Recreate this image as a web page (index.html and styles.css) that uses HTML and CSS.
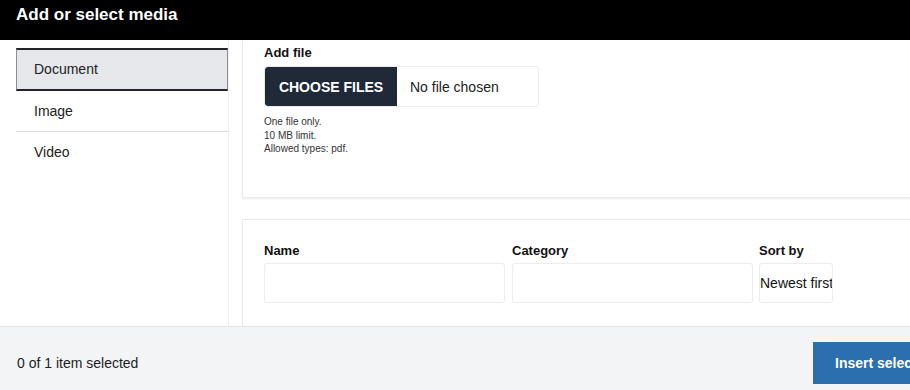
FILE: index.html
```html
<!DOCTYPE html>
<html>
<head>
<meta charset="utf-8">
<link rel="stylesheet" href="styles.css">
</head>
<body>
<div class="dialog">
  <header class="titlebar"><h1 class="title">Add or select media</h1></header>
  <div class="body">
    <nav class="sidebar">
      <div class="tab tab-active">Document</div>
      <div class="tab">Image</div>
      <div class="tab tab-last">Video</div>
    </nav>
    <main class="main">
      <section class="card card-upload">
        <div class="label">Add file</div>
        <div class="file-input">
          <span class="file-btn">CHOOSE FILES</span>
          <span class="file-name">No file chosen</span>
        </div>
        <div class="help">
          <div>One file only.</div>
          <div>10 MB limit.</div>
          <div>Allowed types: pdf.</div>
        </div>
      </section>
      <section class="card card-filters">
        <div class="filters">
          <div class="field field-name">
            <div class="label">Name</div>
            <div class="input"></div>
          </div>
          <div class="field field-cat">
            <div class="label">Category</div>
            <div class="input"></div>
          </div>
          <div class="field field-sort">
            <div class="label">Sort by</div>
            <div class="input select">Newest first</div>
          </div>
        </div>
      </section>
    </main>
  </div>
  <footer class="footer">
    <span class="count">0 of 1 item selected</span>
    <span class="insert">Insert selected</span>
  </footer>
</div>
</body>
</html>
```

FILE: styles.css
```css
html, body {
  margin: 0;
  padding: 0;
  background: #fff;
  font-family: "Liberation Sans", Arial, sans-serif;
  color: #222;
}
.dialog {
  width: 910px;
  height: 390px;
  overflow: hidden;
  display: flex;
  flex-direction: column;
}
.titlebar {
  height: 40px;
  flex: none;
  background: #000;
  padding: 0 16px;
  box-sizing: border-box;
}
.title {
  margin: 0;
  color: #fff;
  font-size: 17px;
  font-weight: bold;
  line-height: 29px;
}
.body {
  height: 286px;
  flex: none;
  display: flex;
  overflow: hidden;
}
.sidebar {
  width: 229px;
  flex: none;
  box-sizing: border-box;
  padding: 8px 0 0 16px;
  border-right: 1px solid #efefef;
}
.tab {
  width: 212px;
  box-sizing: border-box;
  height: 41px;
  line-height: 41px;
  padding-left: 18px;
  font-size: 14px;
  color: #222;
  border-bottom: 1px solid #dcdcdc;
}
.tab-last {
  border-bottom: none;
}
.tab-active {
  height: 43px;
  line-height: 39px;
  background: #e6e7eb;
  border-top: 2px solid #23252b;
  border-bottom: 2px solid #23252b;
  border-left: 1px solid #8d8d92;
  border-right: 1px solid #8d8d92;
  padding-left: 17px;
}
.main {
  flex: none;
  width: 720px;
  padding-left: 13px;
  box-sizing: border-box;
}
.card {
  background: #fff;
  border: 1px solid #e8e9eb;
  box-sizing: border-box;
  padding-left: 21px;
}
.card-upload {
  border-top: none;
  height: 158px;
  padding-top: 5px;
  box-shadow: 0 1px 2px rgba(0,0,0,0.08);
}
.card-filters {
  margin-top: 21px;
  height: 120px;
  padding-top: 23px;
}
.label {
  font-size: 13px;
  font-weight: bold;
  color: #111;
  line-height: 15px;
}
.file-input {
  margin-top: 6px;
  width: 275px;
  height: 41px;
  box-sizing: border-box;
  border: 1px solid #ebebeb;
  border-radius: 3px;
  display: flex;
  align-items: stretch;
  overflow: hidden;
}
.file-btn {
  background: #1f2937;
  color: #fff;
  font-weight: bold;
  font-size: 14px;
  width: 132px;
  display: flex;
  align-items: center;
  justify-content: center;
  border-radius: 3px 0 0 3px;
}
.file-name {
  display: flex;
  align-items: center;
  padding-left: 13px;
  font-size: 14px;
  color: #222;
}
.help {
  margin-top: 8px;
  font-size: 10px;
  line-height: 13.5px;
  color: #333;
}
.filters {
  display: flex;
  gap: 7px;
}
.field .label {
  margin-bottom: 5px;
}
.input {
  height: 40px;
  box-sizing: border-box;
  border: 1px solid #ececec;
  border-radius: 3px;
  background: #fff;
}
.field-name .input { width: 241px; }
.field-cat .input { width: 241px; }
.field-sort { margin-left: -1px; }
.select {
  width: 74px;
  font-size: 14px;
  line-height: 38px;
  padding-left: 0;
  white-space: nowrap;
  overflow: hidden;
  color: #111;
}
.footer {
  flex: 1;
  background: #f3f4f6;
  border-top: 1px solid #e3e5e9;
  display: flex;
  align-items: center;
  padding: 8px 0 0 17px;
}
.count {
  flex: none;
  width: 796px;
  font-size: 14px;
  color: #1d1d1d;
  white-space: nowrap;
}
.insert {
  flex: none;
  height: 42px;
  padding: 0 22px;
  background: #2c6fae;
  color: #fff;
  font-size: 14px;
  font-weight: bold;
  display: flex;
  align-items: center;
  white-space: nowrap;
}
```
